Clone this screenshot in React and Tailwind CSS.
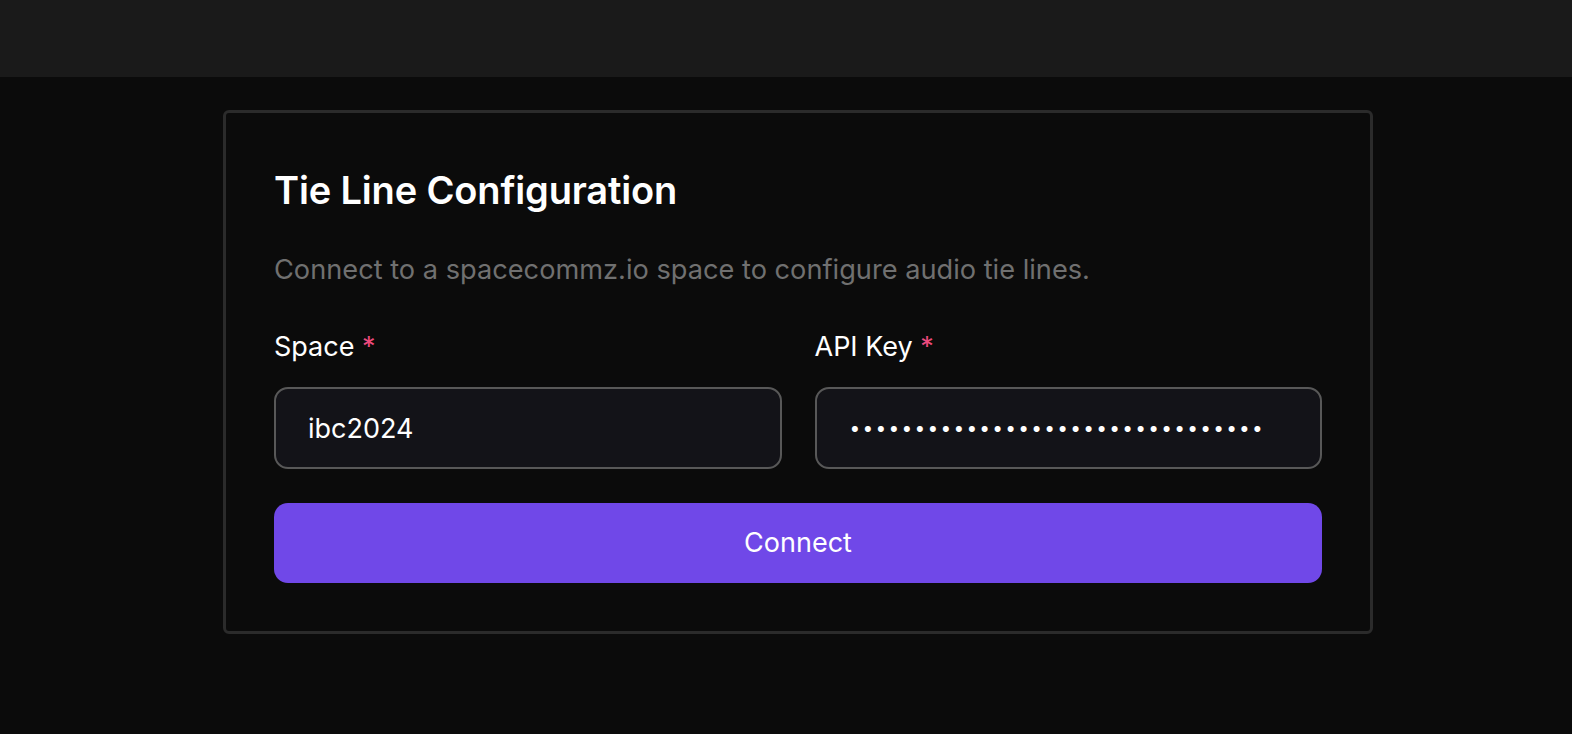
import React from 'react';

const Field = ({ label, children }) => (
  <div className="flex flex-col">
    <label className="text-[27px] leading-[36px] font-normal text-white">
      {label} <span className="text-[#ec4a7d]">*</span>
    </label>
    <div className="mt-[22px]">{children}</div>
  </div>
);

const App = () => {
  return (
    <div
      className="min-h-[734px] bg-[#0b0b0b] text-white"
      style={{ fontFamily: 'Inter, "Noto Sans", sans-serif' }}
    >
      <header className="h-[77px] bg-[#1a1a1a]" />

      <main className="pt-[33px] pl-[223px]">
        <section className="w-[1150px] rounded-[6px] border-[3px] border-[#2b2b2b] bg-[#0b0b0b] px-[48px] pt-[54px] pb-[48px]">
          <h2 className="text-[38px] leading-[46px] font-semibold tracking-[-0.15px] text-white">
            Tie Line Configuration
          </h2>
          <p className="mt-[37px] text-[27.2px] leading-[40px] text-[#707070]">
            Connect to a spacecommz.io space to configure audio tie lines.
          </p>

          <div className="mt-[39px] grid grid-cols-2 gap-[33px]">
            <Field label="Space">
              <input
                type="text"
                defaultValue="ibc2024"
                className="h-[82px] w-full rounded-[14px] border-2 border-[#585858] bg-[#131318] px-[32px] text-[27px] text-white outline-none"
              />
            </Field>
            <Field label="API Key">
              <input
                type="password"
                defaultValue="sk_live_0123456789abcdefghijklmn"
                className="h-[82px] w-full rounded-[14px] border-2 border-[#585858] bg-[#131318] px-[33px] text-[19px] tracking-[2.3px] text-white outline-none"
              />
            </Field>
          </div>

          <button
            type="button"
            className="mt-[34px] h-[80px] w-full rounded-[14px] bg-[#7048e8] text-[27px] font-normal text-white"
          >
            Connect
          </button>
        </section>
      </main>
    </div>
  );
};

export default App;
